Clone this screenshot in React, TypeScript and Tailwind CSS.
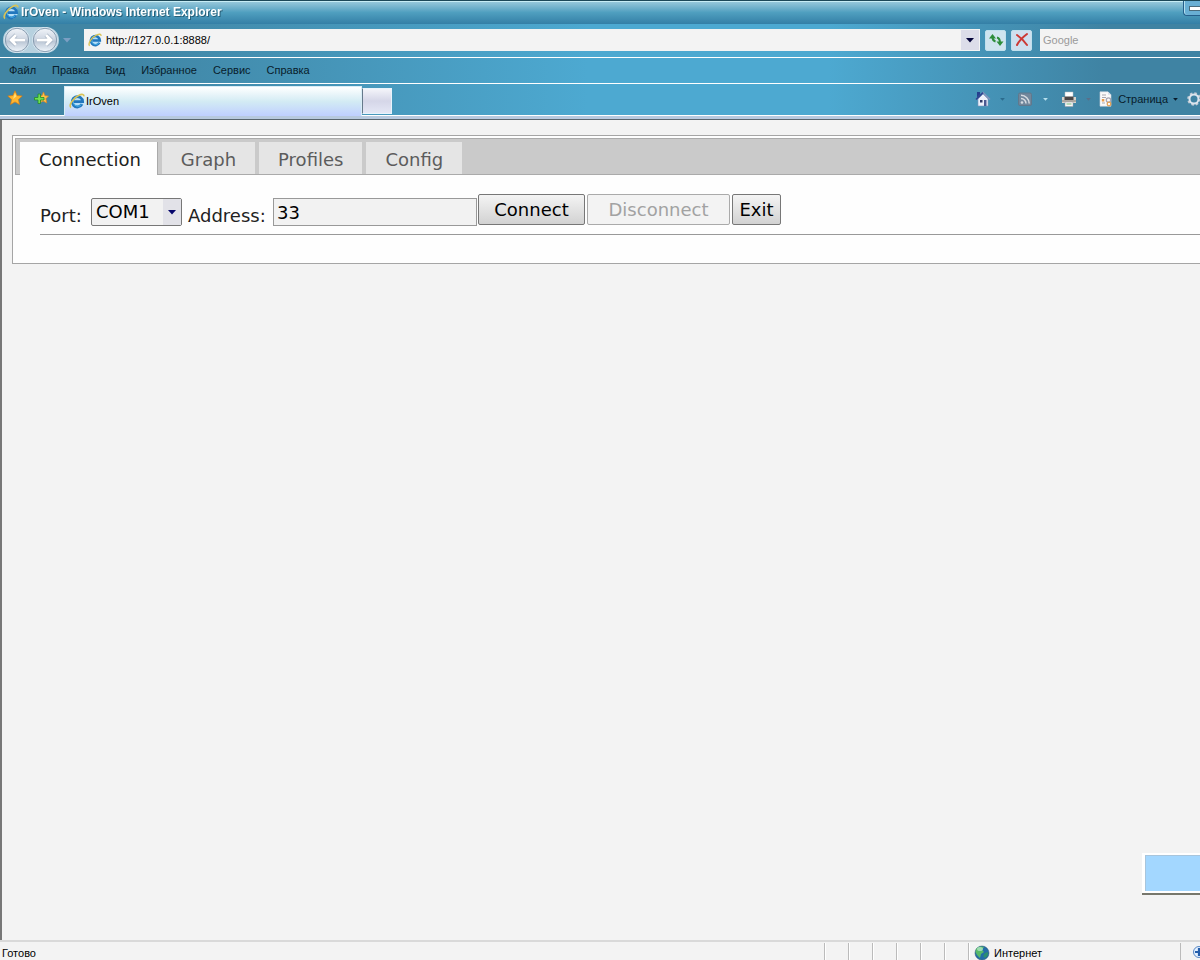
import React, { useState } from 'react';

const TABS = ['Connection', 'Graph', 'Profiles', 'Config'];
const MENU = ['Файл', 'Правка', 'Вид', 'Избранное', 'Сервис', 'Справка'];

const IeIcon: React.FC<{ className: string }> = ({ className }) => (
  <svg viewBox="0 0 16 16" className={className} aria-hidden="true">
    <circle cx="8.5" cy="8.5" r="6.3" fill="#b5dff8" />
    <path d="M13 11.2A5.2 5.2 0 1 1 13.6 8.6H5" fill="none" stroke="#2277bd" strokeWidth="2.8" />
    <path d="M12.4 11.6A4.8 4.8 0 0 1 4 9" fill="none" stroke="#48b4ea" strokeWidth="1" />
    <path d="M2 14.5C-.8 12.6 4.5 4.6 10 2.2c3-1.4 5.2-1 4.8 1.2" fill="none" stroke="#d9c356" strokeWidth="1.6" />
  </svg>
);

const Caret: React.FC<{ className: string }> = ({ className }) => (
  <svg viewBox="0 0 8 5" className={className} aria-hidden="true">
    <path d="M0 0h8L4 4.5z" fill="currentColor" />
  </svg>
);

const NavButton: React.FC<{ label: string; path: string }> = ({ label, path }) => (
  <button aria-label={label} className="h-[26px] w-[28px]">
    <svg viewBox="0 0 28 26" className="h-full w-full">
      <defs>
        <linearGradient id={`nav-${label}`} x1="0" y1="0" x2="0" y2="1">
          <stop offset="0" stopColor="#f4f7fb" />
          <stop offset=".45" stopColor="#cfd7e3" />
          <stop offset=".55" stopColor="#b9c5d4" />
          <stop offset="1" stopColor="#f5faff" />
        </linearGradient>
      </defs>
      <circle cx="14" cy="13" r="12.5" fill={`url(#nav-${label})`} stroke="#d8e8f2" />
      <circle cx="14" cy="13" r="11.7" fill="none" stroke="#7d93a8" strokeWidth=".9" />
      <path d={path} fill="none" stroke="#9dabbd" strokeWidth="4" strokeLinejoin="round" />
      <path d={path} fill="none" stroke="#fff" strokeWidth="2.800" />
    </svg>
  </button>
);

const HomeIcon = () => (
  <svg viewBox="0 0 16 16" className="h-4 w-4">
    <path d="M2 1h3v5H2z" fill="#253f8e" />
    <path d="M3 8l5-5 5 5v7H3z" fill="#edf0fa" stroke="#8296be" strokeWidth=".6" />
    <path d="M1 8.5L8 1.6l7 6.9" fill="none" stroke="#8694bd" strokeWidth="1.4" />
    <path d="M1 8.5L8 1.6" fill="none" stroke="#2c4390" strokeWidth="1.6" />
    <path d="M5 9h2.5v2.5H5z" fill="#303a68" />
    <path d="M9 9h2.5v6H9z" fill="#4c5a92" />
  </svg>
);

const FeedIcon = () => (
  <svg viewBox="0 0 16 16" className="h-4 w-4">
    <rect x="1.5" y="2" width="13" height="12.5" rx="1.5" fill="#71879c" stroke="#61788c" />
    <circle cx="5" cy="11.5" r="1.3" fill="#d6dce2" />
    <path d="M4 7.5a5 5 0 0 1 5 5M4 4.3a8.2 8.2 0 0 1 8.2 8.2" fill="none" stroke="#d6dce2" strokeWidth="1.5" />
  </svg>
);

const PrinterIcon = () => (
  <svg viewBox="0 0 16 16" className="h-4 w-4">
    <path d="M4 1h8v6H4z" fill="#fff" stroke="#b6bcc2" strokeWidth=".5" />
    <path d="M1 6h14v6H1z" fill="#d6d4cd" />
    <path d="M3.5 5.5h9V9h-9z" fill="#4b4747" />
    <path d="M1 9.5h14v1H1z" fill="#827c75" />
    <path d="M4 11h8v4.5H4z" fill="#f8f8f8" stroke="#9b9ba0" strokeWidth=".5" />
    <path d="M5.5 13h5" stroke="#77bb78" />
  </svg>
);

const PageIcon = () => (
  <svg viewBox="0 0 16 16" className="h-4 w-4">
    <path d="M2 .8h8l3 3v11.4H2z" fill="#fafafa" stroke="#cdd3dc" strokeWidth=".6" />
    <path d="M10 .8v3h3" fill="#d7e0eb" />
    <path d="M4 4h4M4 6.5h4M4 12h3" stroke="#a9a9b1" />
    <path d="M3.8 8h2.5v2.5H3.8z" fill="#e99d4b" />
    <circle cx="10.5" cy="9" r="2.2" fill="none" stroke="#a8a7b4" strokeWidth="1.3" />
    <circle cx="11" cy="13" r="1.8" fill="none" stroke="#e4a257" strokeWidth="1.3" />
  </svg>
);

const STAR = 'M8 .8l2.1 4.7 5.1.5-3.8 3.4 1.1 5.1L8 11.9l-4.5 2.6 1.1-5.1L.8 6l5.1-.5z';

const toolbarLine = 'bg-[linear-gradient(90deg,#4085a4_10%,#4da9d1_49%,#4da9d1_69%,#3f83a3_92%)]';

const Browser: React.FC = () => (
  <header className="shrink-0 font-['Liberation_Sans',sans-serif] text-[11px] leading-4 text-[#081c2b]">
    <div className="flex h-6 items-center gap-0.5 border-t border-[#1c4858] bg-linear-to-b from-[#9bcbdd] via-[#4f9fbf] to-[#347fa6] pb-0.5 pl-[3px] font-bold text-white shadow-[inset_0_1px_0_#c7edf5]">
      <IeIcon className="h-4 w-4" />
      <span className="text-[12px] drop-shadow-[1px_1px_0_#286079]">IrOven - Windows Internet Explorer</span>
      <button
        aria-label="Свернуть"
        className="ml-auto flex h-[15px] w-[17px] items-end justify-end self-start rounded-bl-sm border-b border-l border-[#255f8b] bg-[#69afd4] pb-1 shadow-[inset_1px_0_0_#b4e0f0]"
      >
        <span className="h-[5px] w-[11px] border border-r-0 border-[#4b6b7c] bg-white" />
      </button>
    </div>

    {/* Navigation */}
    <div className={`flex h-[34px] items-center border-b border-white pb-px ${toolbarLine}`}>
      <div className="flex w-[84px] items-center pl-[3px]">
        <div className="flex rounded-full bg-[#b7d1df]">
          <NavButton label="back" path="M22 13H8M13 8l-5 5 5 5" />
          <NavButton label="forward" path="M6 13h14M15 8l5 5-5 5" />
        </div>
        <Caret className="ml-1 h-[5px] w-2 text-[#7b9fc3]" />
      </div>
      <div className="flex h-[22px] min-w-0 flex-1 items-center bg-[#f3f3f3] pr-px pl-1">
        <IeIcon className="h-3.5 w-3.5 shrink-0" />
        <input aria-label="Адрес" defaultValue="http://127.0.0.1:8888/" className="ml-1 min-w-0 flex-1 bg-transparent text-black outline-none" />
        <button aria-label="История адресов" className="flex h-5 w-[18px] items-center justify-center bg-[#dcdde9]">
          <Caret className="h-[5px] w-2 text-[#05053a]" />
        </button>
      </div>
      <button aria-label="Обновить" className="ml-[5px] flex h-[21px] w-[21px] items-center justify-center rounded-xs border border-[#c0e0ed] bg-[#cfe4ef]">
        <svg viewBox="0 0 18 18" className="h-[18px] w-[18px]">
          <path d="M2 7.500L5.500 3 9 7.500zM9.500 10.500h7L13 15z" fill="#2d8d3b" />
          <path d="M5.500 6c0 3 1 4 3 4.500M13 12c0-3.500-1-5-3-5.500" fill="none" stroke="#2d8d3b" strokeWidth="2" />
        </svg>
      </button>
      <button aria-label="Остановить" className="ml-[5px] flex h-[21px] w-[21px] items-center justify-center rounded-xs border border-[#c0e0ed] bg-[#cfdfee]">
        <svg viewBox="0 0 16 16" className="h-4 w-4">
          <path d="M3 3c3 2 7 6 10 10M13 2C9 5 5 9 3 13" fill="none" stroke="#cc3834" strokeWidth="2" strokeLinecap="round" />
        </svg>
      </button>
      <input aria-label="Поиск" placeholder="Google" className="ml-2 h-[22px] w-[160px] bg-[#f3f3f3] pl-[3px] outline-none placeholder:text-[#9a9a9a]" />
    </div>

    <nav className={`flex h-[26px] items-center gap-4 border-b border-white pb-px pl-[9px] ${toolbarLine}`}>
      {MENU.map((item) => (
        <button key={item}>{item}</button>
      ))}
    </nav>

    {/* Favourites, page tabs and commands */}
    <div className={`flex h-8 border-b border-white ${toolbarLine}`}>
      <div className="flex w-16 gap-[10px] pt-[6px] pl-[7px]">
        <button aria-label="Центр избранного" className="h-4 w-4">
          <svg viewBox="0 0 16 16" className="h-4 w-4">
            <path d={STAR} fill="#ffb62e" stroke="#d97b12" strokeWidth=".7" />
            <path d="M8 3l1.300 3.500L6 9z" fill="#ffe07b" />
          </svg>
        </button>
        <button aria-label="Добавить в избранное" className="h-4 w-4">
          <svg viewBox="0 0 16 16" className="h-4 w-4">
            <path d="M10.500 2l1.400 3.700 3.600.3-2.600 2.700.9 4.300-3.800-2-3.500 2 1-4.300L5 6l4-.3z" fill="#ffc247" stroke="#dd8420" strokeWidth=".7" />
            <path d="M5 4h2.500v3.500H11V10H7.500v3.500H5V10H1.500V7.500H5z" fill="#6ee052" stroke="#218a2b" strokeWidth=".8" />
          </svg>
        </button>
      </div>
      <button className="mt-0.5 -mb-px flex w-[298px] items-center gap-px border-x border-t border-[#d9edf6] bg-linear-to-b from-white via-[#d3ebf4] to-[#bfcfff] pb-0.5 pl-1 text-black">
        <IeIcon className="h-4 w-4" />
        IrOven
      </button>
      <button aria-label="Новая вкладка" className="mt-1 mb-px w-[30px] border border-[#e8f4fc] border-l-[#65798b] bg-linear-to-b from-[#f4f4fa] via-[#d5d6e8] to-[#e4e7f5]" />
      <div className="ml-auto flex h-[30px] items-center overflow-hidden">
        <button aria-label="Домой" className="flex w-[42px] items-center gap-[9px]">
          <HomeIcon />
          <Caret className="h-[3px] w-[5px] text-[#2b6b8d]" />
        </button>
        <button aria-label="Каналы" className="flex w-11 items-center gap-[10px]">
          <FeedIcon />
          <Caret className="h-[3px] w-[5px] text-[#b6dfed]" />
        </button>
        <button aria-label="Печать" className="flex w-[37px] items-center gap-[9px]">
          <PrinterIcon />
          <Caret className="h-[3px] w-[5px] text-[#596f89]" />
        </button>
        <button className="flex items-center gap-1">
          <PageIcon />
          Страница
          <Caret className="ml-px h-[3px] w-[5px] text-[#081c2b]" />
        </button>
        <button aria-label="Сервис" className="ml-2 w-[14px] overflow-hidden">
          <svg viewBox="0 0 16 16" className="h-4 w-4">
            <circle cx="8" cy="8" r="5.800" fill="none" stroke="#c4ccd5" strokeWidth="2" strokeDasharray="2.500 2" />
            <circle cx="8" cy="8" r="4.500" fill="none" stroke="#dce5ee" strokeWidth="2" />
          </svg>
        </button>
      </div>
    </div>
    <div className="h-1 border-b border-[#59656e] bg-[#b7c9df]" />
  </header>
);

const App: React.FC = () => {
  const [tab, setTab] = useState('Connection');
  const [port, setPort] = useState('COM1');
  const [address, setAddress] = useState('33');

  return (
    <div className="flex min-h-screen flex-col overflow-hidden bg-[#f3f3f3]">
      <Browser />

      <main className="flex flex-1 flex-col border-l-2 border-[#777] pt-[15px] pl-[10px] font-['DejaVu_Sans',sans-serif] text-[18px] leading-6 text-[#222]">
        <section className="border border-r-0 border-[#a5a5a5] bg-[#fefefe] pt-0.5 pl-0.5">
          <div role="tablist" className="flex h-[37px] gap-1 border-y border-l border-[#aaa] bg-[#cacaca] pt-[3px] pl-1">
            {TABS.map((name) => (
              <button
                key={name}
                role="tab"
                aria-selected={tab === name}
                onClick={() => setTab(name)}
                className={
                  tab === name
                    ? '-mb-px border-r border-[#aaa] bg-[#fefefe] pt-0.5 pr-4 pl-[19px] text-[#222]'
                    : 'bg-[#e5e5e5] px-[19px] pt-[3px] text-[#5c5c5c]'
                }
              >
                {name}
              </button>
            ))}
          </div>

          <div className="pt-[19px] pb-7 pl-[25px]">
            <div className="flex h-[41px] items-start border-b border-[#999]">
              <label htmlFor="port" className="mt-[10px] w-[51px]">Port:</label>
              <div className="relative mt-1">
                <select
                  id="port"
                  value={port}
                  onChange={(e) => setPort(e.target.value)}
                  className="h-7 w-[91px] appearance-none rounded-xs border border-[#777] bg-[#f2f2f2] pl-1 text-black outline-none"
                >
                  <option>COM1</option>
                  <option>COM2</option>
                </select>
                <span className="pointer-events-none absolute inset-y-px right-px flex w-[18px] items-center justify-center bg-[#e2e2e8]">
                  <Caret className="h-[5px] w-2 text-[#05056b]" />
                </span>
              </div>
              <label htmlFor="address" className="mt-[10px] ml-1.5 w-[85px]">Address:</label>
              <input
                id="address"
                value={address}
                onChange={(e) => setAddress(e.target.value)}
                className="mt-1 h-7 w-[204px] border border-[#999] bg-[#f2f2f2] pl-[3px] text-black outline-none"
              />
              <div className="ml-px flex h-[31px] gap-0.5">
                <button className="w-[107px] rounded-xs border border-[#777] bg-linear-to-b from-[#f4f4f4] to-[#d2d2d2] text-black">Connect</button>
                <button disabled className="w-[143px] rounded-xs border border-[#aaa] bg-[#f3f3f3] text-[#a2a2a2]">Disconnect</button>
                <button className="w-[49px] rounded-xs border border-[#777] bg-linear-to-b from-[#f4f4f4] to-[#d2d2d2] text-black">Exit</button>
              </div>
            </div>
          </div>
        </section>

        <div className="mt-auto mb-[45px] h-[42px] w-[58px] self-end border-b-2 border-[#77776c] bg-white pt-0.5 pb-0.5 pl-[3px]">
          <div className="h-full border-t border-l border-[#a8c5dc] bg-[#a3d7ff]" />
        </div>
      </main>

      <footer className="flex h-5 shrink-0 items-stretch border-t-2 border-[#d9d9d9] pt-px font-['Liberation_Sans',sans-serif] text-[11px] leading-5 text-black">
        <span className="flex-1 pl-0.5">Готово</span>
        {[0, 1, 2, 3, 4, 5].map((i) => (
          <span key={i} className="w-6 border-l border-[#bbb] shadow-[inset_1px_0_0_#fff]" />
        ))}
        <span className="flex w-[212px] items-center gap-1 border-l border-[#bbb] pt-0.5 pl-[5px] shadow-[inset_1px_0_0_#fff]">
          <svg viewBox="0 0 16 16" className="h-4 w-4">
            <circle cx="8" cy="8" r="7" fill="#246da8" stroke="#28516d" strokeWidth=".5" />
            <path d="M2 4c2-3 6-3 8-2L8 5l2 2-3 2-1 4-3-3-1.500-3z" fill="#58b969" />
            <path d="M11 8l3-1c.5 3-1 5-3 6l-2-2z" fill="#2c8e70" />
            <ellipse cx="6" cy="4" rx="3" ry="2" fill="#ccf3df" opacity=".6" />
          </svg>
          Интернет
        </span>
        <span className="flex w-5 items-center overflow-hidden border-l border-[#bbb] pl-[11px]">
          <svg viewBox="0 0 14 14" className="h-3.5 w-3.5 shrink-0">
            <circle cx="7" cy="7" r="5.500" fill="#e3f0ff" stroke="#5989c6" />
            <path d="M7 3v8M3 7h8" stroke="#245eab" strokeWidth="2.200" />
          </svg>
        </span>
      </footer>
    </div>
  );
};

export default App;
